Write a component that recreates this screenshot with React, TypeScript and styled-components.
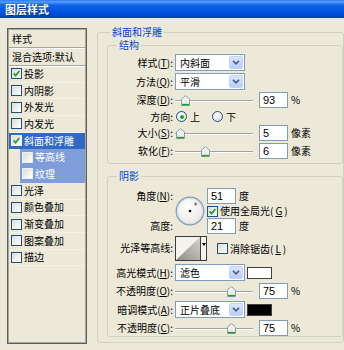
import React from "react";
import styled, { createGlobalStyle } from "styled-components";

const GlobalStyle = createGlobalStyle`
  html, body {
    margin: 0;
    padding: 0;
    background: #ece9d8;
  }
  body {
    font-family: "Noto Sans CJK SC", "Liberation Sans", sans-serif;
    font-size: 10px;
    color: #000;
  }
`;

const Dialog = styled.div`
  width: 344px;
  height: 350px;
  overflow: hidden;
  background: #ece9d8;
  display: flex;
  flex-direction: column;
`;

const TitleBar = styled.div`
  height: 18px;
  flex: none;
  display: flex;
  align-items: center;
  padding-left: 5px;
  background: linear-gradient(
    #2a77ef 0%,
    #5a9cf7 10%,
    #1063e6 28%,
    #0056e0 60%,
    #004bd4 85%,
    #003caf 100%
  );
  color: #fff;
  font-weight: bold;
  font-size: 11px;
  line-height: 1;
  text-shadow: 1px 1px 0 #0b2c8a;
`;

const Body = styled.div`
  display: flex;
  align-items: flex-start;
  gap: 10px;
  padding: 10px 0 0 7px;
`;

/* ---------- left style list ---------- */

const StyleList = styled.div`
  width: 80px;
  height: 316px;
  flex: none;
  box-sizing: border-box;
  border: 1px solid #5e5e5e;
  box-shadow: inset 1px 1px 0 #a7a69c, inset -1px -1px 0 #a7a69c;
  padding: 1px;
  line-height: 1;
`;

const ListHead = styled.div`
  height: 17px;
  display: flex;
  align-items: center;
  padding-left: 3px;
  border-bottom: 1px solid #a7a69c;
  box-shadow: 0 1px 0 #fff;
`;

const Item = styled.div<{ $selected?: boolean; $sub?: boolean }>`
  height: 16.7px;
  box-sizing: border-box;
  display: flex;
  align-items: center;
  gap: 2px;
  margin-left: ${(p) => (p.$sub ? 11 : 0)}px;
  padding-left: 2px;
  background: ${(p) => (p.$selected ? "#316ac5" : p.$sub ? "#7f9cdb" : "transparent")};
  color: ${(p) => (p.$selected || p.$sub ? "#fff" : "#000")};
  border-bottom: 1px solid ${(p) => (p.$selected || p.$sub ? "transparent" : "#f3f1e7")};
`;

const Box = styled.span<{ $light?: boolean }>`
  width: 9px;
  height: 9px;
  flex: none;
  border: 1px solid ${(p) => (p.$light ? "#e8eefa" : "#1c5180")};
  background: linear-gradient(135deg, #dcdcd7, #ffffff);
  display: inline-flex;
  align-items: center;
  justify-content: center;
`;

function CheckBox({ checked, light }: { checked?: boolean; light?: boolean }) {
  return (
    <Box $light={light}>
      {checked && (
        <svg width="7" height="7" viewBox="0 0 7 7">
          <path d="M0.6 3.4 L2.6 5.6 L6.4 1" fill="none" stroke="#21a121" strokeWidth="1.7" />
        </svg>
      )}
    </Box>
  );
}

const styleItems = [
  { name: "投影", checked: true },
  { name: "内阴影" },
  { name: "外发光" },
  { name: "内发光" },
  { name: "斜面和浮雕", checked: true, selected: true },
  { name: "等高线", sub: true },
  { name: "纹理", sub: true },
  { name: "光泽" },
  { name: "颜色叠加" },
  { name: "渐变叠加" },
  { name: "图案叠加" },
  { name: "描边" },
];

/* ---------- group boxes ---------- */

const Group = styled.fieldset`
  margin: 0;
  min-width: 0;
  box-sizing: border-box;
  border: 1px solid #d0d0bf;
  border-radius: 3px;
`;

const OuterGroup = styled(Group)`
  width: 280px;
  height: 316px;
  margin-top: -1px;
  padding: 3px 0 0 9px;
`;

const InnerGroup = styled(Group)<{ $h: number }>`
  height: ${(p) => p.$h}px;
  padding: 4px 0 0 0;
  & + & {
    margin-top: 7px;
  }
`;

const Legend = styled.legend<{ $inset: number }>`
  color: #0046d5;
  padding: 0 2px;
  margin-left: ${(p) => p.$inset}px;
  line-height: 10px;
  font-size: 10px;
`;

const FieldGrid = styled.div<{ $rows: string; $mt?: number }>`
  display: grid;
  grid-template-columns: 65px 1fr;
  grid-template-rows: ${(p) => p.$rows};
  column-gap: 2px;
  row-gap: 2px;
  align-items: center;
  margin-top: ${(p) => p.$mt ?? 0}px;
  line-height: 1;
`;

const Label = styled.span`
  text-align: right;
  white-space: nowrap;
`;

const Controls = styled.div<{ $gap?: number }>`
  display: flex;
  align-items: center;
  gap: ${(p) => p.$gap ?? 0}px;
  white-space: nowrap;
`;

/* ---------- controls ---------- */

const SelectBox = styled.div`
  width: 70px;
  height: 17px;
  box-sizing: border-box;
  border: 1px solid #7f9db9;
  background: #fff;
  display: flex;
  align-items: center;
  justify-content: space-between;
  padding: 0 1px 0 4px;
`;

const DropButton = styled.span`
  width: 14px;
  height: 13px;
  box-sizing: border-box;
  border-radius: 2px;
  border: 1px solid #c3d3fd;
  background: linear-gradient(#dbe6fd, #b9cdf8);
  display: flex;
  align-items: center;
  justify-content: center;
`;

function Select({ value }: { value: string }) {
  return (
    <SelectBox>
      <span>{value}</span>
      <DropButton>
        <svg width="8" height="5" viewBox="0 0 8 5">
          <path d="M1 0.8 L4 3.8 L7 0.8" fill="none" stroke="#4d6185" strokeWidth="1.7" />
        </svg>
      </DropButton>
    </SelectBox>
  );
}

const NumberInput = styled.input`
  width: 29px;
  height: 16px;
  box-sizing: border-box;
  margin: 0;
  border: 1px solid #7f9db9;
  background: #fff;
  padding: 0 0 0 3px;
  font-family: "Liberation Sans", sans-serif;
  font-size: 11px;
  color: #000;
  outline: none;
`;

const Track = styled.div`
  position: relative;
  width: 78px;
  height: 16px;
  flex: none;
  margin-right: 6px;
  &::before {
    content: "";
    position: absolute;
    left: 0;
    right: 0;
    top: 8px;
    height: 1px;
    background: #a3a29a;
    box-shadow: 0 1px 0 #fff;
  }
`;

const Thumb = styled.svg`
  position: absolute;
  top: 3px;
`;

function Slider({ value, max }: { value: number; max: number }) {
  const left = (value / max) * 69;
  return (
    <Track>
      <Thumb width="9" height="11" viewBox="0 0 9 11" style={{ left }}>
        <defs>
          <linearGradient id="thumbFill" x1="0" y1="0" x2="0" y2="1">
            <stop offset="0" stopColor="#ffffff" />
            <stop offset="1" stopColor="#e3e2dc" />
          </linearGradient>
        </defs>
        <path d="M0.5 4 L4.5 0.6 L8.5 4 V10.5 H0.5 Z" fill="url(#thumbFill)" stroke="#8b9bb0" />
        <path d="M1 9.6 H8" stroke="#21a121" strokeWidth="1.4" />
      </Thumb>
    </Track>
  );
}

const Unit = styled.span`
  margin-left: 3px;
`;

const RadioCircle = styled.span<{ $on?: boolean }>`
  width: 9px;
  height: 9px;
  flex: none;
  border-radius: 50%;
  border: 1px solid #1c5180;
  background: radial-gradient(circle at 30% 30%, #ffffff, #dcdcd7);
  display: inline-flex;
  align-items: center;
  justify-content: center;
  &::after {
    content: "";
    width: 4px;
    height: 4px;
    border-radius: 50%;
    background: ${(p) => (p.$on ? "#21a121" : "transparent")};
  }
`;

const RadioOption = styled.span`
  display: inline-flex;
  align-items: center;
  gap: 3px;
  margin-left: 1px;
  margin-right: 11px;
`;

const CheckOption = styled.span`
  display: inline-flex;
  align-items: center;
  gap: 2px;
`;

const Swatch = styled.span<{ $color: string }>`
  width: 25px;
  height: 12px;
  box-sizing: border-box;
  margin-left: 2px;
  border: 1px solid #404040;
  background: ${(p) => p.$color};
`;

/* ---------- angle section ---------- */

const AngleGrid = styled.div`
  display: grid;
  grid-template-columns: 65px 30px auto;
  grid-template-rows: 16px 12px 16px;
  column-gap: 2px;
  row-gap: 1px;
  align-items: center;
  margin-top: 3px;
  line-height: 1;
`;

const DialCell = styled.div`
  grid-column: 2;
  grid-row: 1 / 4;
  display: flex;
  align-items: center;
  justify-content: center;
`;

function AngleDial({ angle }: { angle: number }) {
  const rad = (angle * Math.PI) / 180;
  const mx = 15 + 9 * Math.cos(rad);
  const my = 15 - 9 * Math.sin(rad);
  return (
    <svg width="30" height="30" viewBox="0 0 30 30">
      <defs>
        <radialGradient id="dialFill" cx="0.4" cy="0.35" r="0.7">
          <stop offset="0" stopColor="#ffffff" />
          <stop offset="1" stopColor="#e7e6e0" />
        </radialGradient>
      </defs>
      <circle cx="15" cy="15" r="13.8" fill="url(#dialFill)" stroke="#7f9db9" strokeWidth="1.2" />
      <circle cx="15" cy="15" r="12.6" fill="none" stroke="#c9d5e6" strokeWidth="0.8" />
      <circle cx="15" cy="15" r="1.3" fill="#000" />
      <path
        d={`M${mx - 1.6} ${my} H${mx + 1.6} M${mx} ${my - 1.6} V${my + 1.6}`}
        stroke="#555"
        strokeWidth="0.9"
      />
    </svg>
  );
}

const ContourPicker = styled.div`
  display: flex;
  width: 32px;
  height: 25px;
  box-sizing: border-box;
  border: 1px solid #3c3c3c;
  background: #fff;
  align-self: start;
`;

const ContourArrow = styled.span`
  width: 6px;
  border-left: 1px solid #3c3c3c;
  background: #f4f3ee;
  display: flex;
  justify-content: center;
  padding-top: 6px;
  box-sizing: border-box;
`;

const LabelTop = styled(Label)`
  align-self: center;
  padding-bottom: 2px;
`;

export default function App() {
  return (
    <Dialog>
      <GlobalStyle />
      <TitleBar>图层样式</TitleBar>
      <Body>
        <StyleList>
          <ListHead>样式</ListHead>
          <ListHead>混合选项:默认</ListHead>
          {styleItems.map((it) => (
            <Item key={it.name} $selected={it.selected} $sub={it.sub}>
              <CheckBox checked={it.checked} light={it.selected || it.sub} />
              <span>{it.name}</span>
            </Item>
          ))}
        </StyleList>

        <OuterGroup>
          <Legend $inset={3}>斜面和浮雕</Legend>
          <InnerGroup $h={124}>
            <Legend $inset={9}>结构</Legend>
            <FieldGrid $rows="17px 17px 16px 13px 16px 16px">
              <Label>
                样式(<u>T</u>):
              </Label>
              <Controls>
                <Select value="内斜面" />
              </Controls>
              <Label>
                方法(<u>Q</u>):
              </Label>
              <Controls>
                <Select value="平滑" />
              </Controls>
              <Label>
                深度(<u>D</u>):
              </Label>
              <Controls>
                <Slider value={93} max={1000} />
                <NumberInput readOnly defaultValue="93" />
                <Unit>%</Unit>
              </Controls>
              <Label>方向:</Label>
              <Controls>
                <RadioOption>
                  <RadioCircle $on />上
                </RadioOption>
                <RadioOption>
                  <RadioCircle />下
                </RadioOption>
              </Controls>
              <Label>
                大小(<u>S</u>):
              </Label>
              <Controls>
                <Slider value={5} max={250} />
                <NumberInput readOnly defaultValue="5" />
                <Unit>像素</Unit>
              </Controls>
              <Label>
                软化(<u>F</u>):
              </Label>
              <Controls>
                <Slider value={6} max={16} />
                <NumberInput readOnly defaultValue="6" />
                <Unit>像素</Unit>
              </Controls>
            </FieldGrid>
          </InnerGroup>

          <InnerGroup $h={166}>
            <Legend $inset={9}>阴影</Legend>
            <AngleGrid>
              <Label>
                角度(<u>N</u>):
              </Label>
              <DialCell>
                <AngleDial angle={51} />
              </DialCell>
              <Controls>
                <NumberInput readOnly defaultValue="51" />
                <Unit>度</Unit>
              </Controls>
              <span />
              <Controls>
                <CheckOption>
                  <CheckBox checked />
                  使用全局光(<u>G</u>)
                </CheckOption>
              </Controls>
              <Label>高度:</Label>
              <Controls>
                <NumberInput readOnly defaultValue="21" />
                <Unit>度</Unit>
              </Controls>
            </AngleGrid>

            <FieldGrid $rows="27px 17px 16px 17px 16px" $mt={1}>
              <LabelTop>光泽等高线:</LabelTop>
              <Controls $gap={10}>
                <ContourPicker>
                  <svg width="24" height="23" viewBox="0 0 24 23">
                    <defs>
                      <linearGradient id="contourFill" x1="0" y1="1" x2="1" y2="0">
                        <stop offset="0" stopColor="#8f8d84" />
                        <stop offset="1" stopColor="#d6d4cb" />
                      </linearGradient>
                    </defs>
                    <rect width="24" height="23" fill="#f3f2ec" />
                    <polygon points="0,23 24,0 24,23" fill="url(#contourFill)" />
                  </svg>
                  <ContourArrow>
                    <svg width="4" height="3" viewBox="0 0 4 3">
                      <polygon points="0,0 4,0 2,3" fill="#000" />
                    </svg>
                  </ContourArrow>
                </ContourPicker>
                <CheckOption>
                  <CheckBox />
                  消除锯齿(<u>L</u>)
                </CheckOption>
              </Controls>
              <Label>
                高光模式(<u>H</u>):
              </Label>
              <Controls>
                <Select value="滤色" />
                <Swatch $color="#ffffff" />
              </Controls>
              <Label>
                不透明度(<u>O</u>):
              </Label>
              <Controls>
                <Slider value={75} max={100} />
                <NumberInput readOnly defaultValue="75" />
                <Unit>%</Unit>
              </Controls>
              <Label>
                暗调模式(<u>A</u>):
              </Label>
              <Controls>
                <Select value="正片叠底" />
                <Swatch $color="#000000" />
              </Controls>
              <Label>
                不透明度(<u>C</u>):
              </Label>
              <Controls>
                <Slider value={75} max={100} />
                <NumberInput readOnly defaultValue="75" />
                <Unit>%</Unit>
              </Controls>
            </FieldGrid>
          </InnerGroup>
        </OuterGroup>
      </Body>
    </Dialog>
  );
}
